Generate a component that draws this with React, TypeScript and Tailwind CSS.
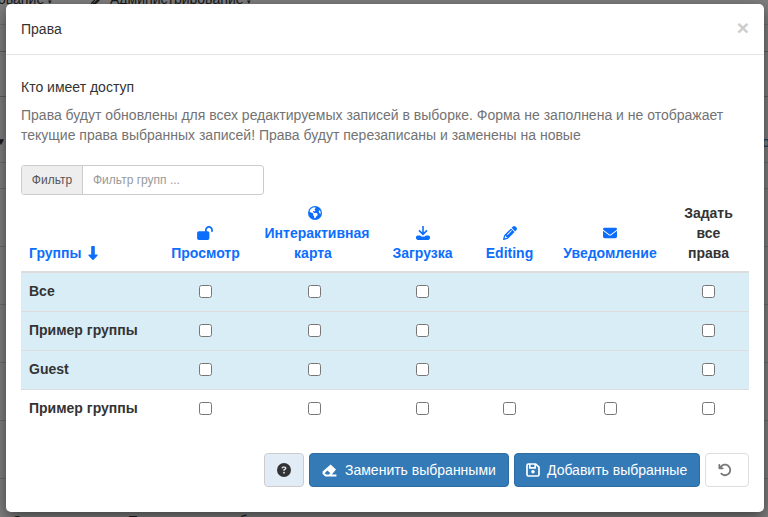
import React from "react";
import {
  FaArrowRotateLeft,
  FaCircleQuestion,
  FaEarthAmericas,
  FaEnvelope,
  FaLockOpen,
  FaPencil,
} from "react-icons/fa6";

function DownloadIcon() {
  return (
    <svg width="14" height="14" viewBox="0 0 14 14" fill="none">
      <path d="M7 0V8M3 4.4L7 8.4L11 4.4" stroke="currentColor" strokeWidth="1.6" />
      <path
        d="M1.9 9.6H4.2C5 11.2 9 11.2 9.8 9.6H12.1C13.2 9.6 14 10.4 14 11.4V12.1C14 13.2 13.2 14 12.1 14H1.9C0.8 14 0 13.2 0 12.1V11.4C0 10.4 0.8 9.6 1.9 9.6Z"
        fill="currentColor"
      />
    </svg>
  );
}

function DownArrow() {
  return (
    <svg className="ml-[7px]" width="10" height="14" viewBox="0 0 10 14" fill="currentColor">
      <path d="M3.2 0.8Q3.2 0 4 0H6Q6.8 0 6.8 0.8V8.6H9Q10 8.8 9.4 9.8L5.6 13.7Q5 14.2 4.4 13.7L0.6 9.8Q0 8.8 1 8.6H3.2Z" />
    </svg>
  );
}

function EraserIcon() {
  return (
    <svg className="mr-[8px]" width="15" height="13" viewBox="0 0 15 13" fill="none">
      <path d="M8.6 0.6L14 5.4L9.8 10.4H14.4V12.6H3.4L0.6 10V7.6Z" fill="currentColor" />
      <path d="M5.4 6.6L2.6 9.2L4.2 10.6H6.8L8.4 9.2Z" fill="#337ab7" />
    </svg>
  );
}

const columns = [
  { icon: <FaLockOpen className="mr-[1px] h-[14px] w-[16px]" />, lines: ["Просмотр"] },
  { icon: <FaEarthAmericas className="size-[14px]" />, lines: ["Интерактивная", "карта"] },
  { icon: <DownloadIcon />, lines: ["Загрузка"] },
  { icon: <FaPencil className="size-[14px]" />, lines: ["Editing"] },
  { icon: <FaEnvelope className="size-[14px]" />, lines: ["Уведомление"] },
];

const rows = [
  { name: "Все", tinted: true, checks: [true, true, true, false, false, true] },
  { name: "Пример группы", tinted: true, checks: [true, true, true, false, false, true] },
  { name: "Guest", tinted: true, checks: [true, true, true, false, false, true] },
  { name: "Пример группы", tinted: false, checks: [true, true, true, true, true, true] },
];

const grid = "grid grid-cols-[139px_91px_127px_89px_85px_116px_81px]";

function Backdrop() {
  return (
    <div className="absolute inset-0 overflow-hidden bg-[#7f7f7f] text-[14px] leading-5 text-[#1a1a1a]">
      <div className="flex h-[25px] items-start border-b border-[#707070]">
        <div className="-mt-[11px] flex w-full items-center">
          <span className="-ml-[2px] w-[92px] whitespace-nowrap">
            ование <span className="text-[7px]">▾</span>
          </span>
          <FaPencil className="mr-[8px] size-[12px]" />
          <span>
            Администрирование <span className="text-[7px]">▾</span>
          </span>
        </div>
      </div>
      <div className="h-[27px] border-b border-[#606060]" />
      <div className="h-[45px] border-b border-[#606060]" />
      <div className="flex h-[66px] items-center justify-between border-b border-[#6c6c6c] pt-[24px]">
        <span className="-ml-[4px] text-[10px]">▼</span>
        <span className="-mr-[8px] text-[#173c5e]">от</span>
      </div>
      <div className="h-[26px] border-b border-[#6c6c6c]" />
      <div className="h-[58px] border-b border-[#6c6c6c]" />
      <div className="h-[58px] border-b border-[#6c6c6c]" />
      <div className="h-[58px] border-b border-[#6c6c6c]" />
      <div className="h-[58px] border-b border-[#6c6c6c]" />
      <div className="h-[58px] border-b border-[#6c6c6c]" />
      <div className="mt-[32px] ml-[12px] whitespace-nowrap">Ссылка на карту: Пример группы объектов</div>
    </div>
  );
}

function PermissionsTable() {
  return (
    <div className="font-bold">
      <div className={`${grid} h-[78px] items-end border-b-2 border-[#ddd] pb-2 text-[#0d6efd]`}>
        <div className="flex items-center pl-2">
          Группы
          <DownArrow />
        </div>
        {columns.map((c) => (
          <div key={c.lines[0]} className="flex flex-col items-center">
            <div className="flex h-5 items-center">{c.icon}</div>
            {c.lines.map((l) => (
              <div key={l} className={l === "Интерактивная" ? "pl-[5px]" : l === "карта" ? "pr-[3px]" : ""}>
                {l}
              </div>
            ))}
          </div>
        ))}
        <div className="px-4 text-center text-[#333]">Задать все права</div>
      </div>
      {rows.map((r, i) => (
        <div
          key={i}
          className={`${grid} h-[39px] items-center ${r.tinted ? "border-b border-[#ddd] bg-[#d9edf7] pb-[2px]" : "pb-[3px]"}`}
        >
          <div className="pl-2">{r.name}</div>
          {r.checks.map((shown, k) => (
            <div key={k} className="flex justify-center">
              {shown && <input type="checkbox" className="m-0 size-[13px]" />}
            </div>
          ))}
        </div>
      ))}
    </div>
  );
}

export default function App() {
  return (
    <div className="relative h-[517px] w-[768px] overflow-hidden font-['Liberation_Sans',Arial,sans-serif] text-[14px] leading-5 text-[#333]">
      <Backdrop />
      <div className="relative mt-[4px] ml-[6px] flex h-[508px] w-[758px] flex-col rounded-[5px] bg-white shadow-[0_5px_15px_rgba(0,0,0,0.5)]">
        <header className="flex h-[51px] items-center justify-between border-b border-[#e5e5e5] px-[15px]">
          <h4>Права</h4>
          <button className="-mt-[3px] text-[21px] leading-5 font-bold text-[#ccc]">×</button>
        </header>
        <main className="px-[15px] pt-[22px]">
          <div>Кто имеет доступ</div>
          <p className="mt-[8px] text-[#737373]">
            Права будут обновлены для всех редактируемых записей в выборке. Форма не заполнена и не отображает
            <br />
            текущие права выбранных записей! Права будут перезаписаны и заменены на новые
          </p>
          <div className="mt-5 flex h-[30px] w-[243px] overflow-hidden rounded-[3px] border border-[#ccc] text-[12px]">
            <span className="flex w-[61px] items-center justify-center border-r border-[#ccc] bg-[#eee] text-[#555]">
              Фильтр
            </span>
            <input className="min-w-0 flex-1 px-[10px] placeholder:text-[#999]" placeholder="Фильтр групп ..." />
          </div>
          <PermissionsTable />
        </main>
        <footer className="mt-[24px] flex h-[34px] justify-end gap-[5px] px-[15px] text-white">
          <button className="flex h-[34px] w-10 shrink-0 items-center justify-center rounded-[4px] border border-[#ccc] bg-[#e2ecf6] text-[#333]">
            <FaCircleQuestion className="size-[14px]" />
          </button>
          <button className="flex h-[34px] w-[200px] shrink-0 items-center rounded-[4px] border border-[#2e6da4] bg-[#337ab7] pl-[12px]">
            <EraserIcon />
            Заменить выбранными
          </button>
          <button className="flex h-[34px] w-[186px] shrink-0 items-center rounded-[4px] border border-[#2e6da4] bg-[#337ab7] pl-[11px]">
            <svg className="mr-[7px]" width="14" height="14" viewBox="0 0 14 14" fill="none" stroke="currentColor" strokeWidth="1.7">
              <path d="M2.4 1H9.7L13 4.2V11.6Q13 13 11.6 13H2.4Q1 13 1 11.6V2.4Q1 1 2.4 1ZM3.8 1.2V4.8H9.2V1.2" />
              <circle cx="7" cy="8.8" r="1.8" fill="currentColor" stroke="none" />
            </svg>
            Добавить выбранные
          </button>
          <button className="flex h-[34px] w-[44px] shrink-0 items-center rounded-[4px] border border-[#ddd] bg-white pl-[12px] text-[#777]">
            <FaArrowRotateLeft className="size-[14px]" />
          </button>
        </footer>
      </div>
    </div>
  );
}
